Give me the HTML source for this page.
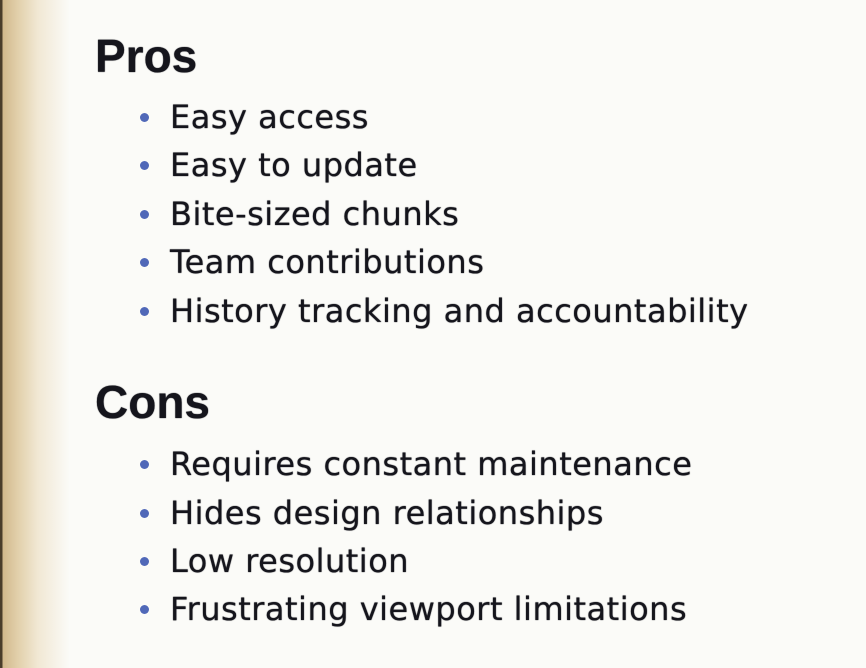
<!DOCTYPE html>
<html><head><style>
html,body{margin:0;padding:0}
body{width:866px;height:668px;position:relative;overflow:hidden;background:#fbfbf8;font-family:"Liberation Sans",sans-serif;color:#15151c}
.edge{position:absolute;left:0;top:0;width:70px;height:668px;background:linear-gradient(90deg,#4a3d2a 0,#4a3d2a 2px,#d2b98c 3px,#e2d0ab 18px,#f1e8d4 38px,#fbfbf8 70px)}
.h{position:absolute;left:95px;font-weight:bold;font-size:46px;line-height:50px;text-shadow:0 0 1px #15151c}
.i{position:absolute;left:170px;font-family:"DejaVu Sans",sans-serif;font-size:32px;line-height:40px;white-space:nowrap;letter-spacing:0.5px;text-shadow:0 0 1px #15151c}
.i:before{content:"";position:absolute;left:-30px;top:16px;width:9px;height:9px;border-radius:50%;background:#5068b8}
</style></head><body>
<div class="edge"></div>
<div class="h" style="top:31px">Pros</div>
<div class="i" style="top:97px">Easy access</div>
<div class="i" style="top:145px">Easy to update</div>
<div class="i" style="top:194px">Bite-sized chunks</div>
<div class="i" style="top:242px">Team contributions</div>
<div class="i" style="top:291px">History tracking and accountability</div>
<div class="h" style="top:377px">Cons</div>
<div class="i" style="top:444px">Requires constant maintenance</div>
<div class="i" style="top:493px">Hides design relationships</div>
<div class="i" style="top:541px">Low resolution</div>
<div class="i" style="top:589px">Frustrating viewport limitations</div>
</body></html>
